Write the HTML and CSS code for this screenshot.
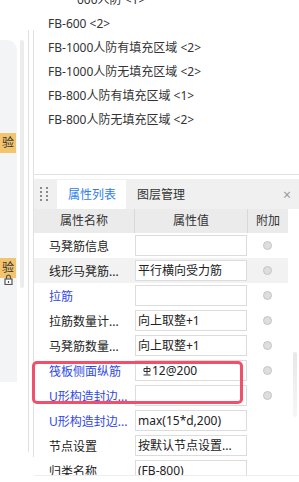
FILE: index.html
```html
<!DOCTYPE html>
<html lang="zh-CN">

<head>
    <meta charset="UTF-8">
    <meta name="viewport" content="width=device-width, initial-scale=1.0">
    <title>属性列表</title>
    <link rel="stylesheet" href="styles.css">
</head>

<body>

    <div class="app">
        <!-- 左侧停靠栏 -->
        <aside class="side">
            <div class="dock">
                <span class="badge badge-first">验</span>
                <span class="badge badge-second">验</span>
                <svg class="lock" width="9" height="11" viewBox="0 0 9 11">
                    <path d="M2.5 5V3.2a2 2 0 0 1 4 0V5" fill="none" stroke="#555" stroke-width="1.2" />
                    <rect x="1" y="5" width="7" height="5.5" fill="#fff" stroke="#555" stroke-width="1.2" />
                    <path d="M4.5 7v2" stroke="#555" stroke-width="1.2" />
                </svg>
            </div>
            <div class="side-scroll"></div>
            <div class="side-line line-a"></div>
            <div class="side-line line-b"></div>
        </aside>

        <main class="main">
            <!-- 构件列表 -->
            <ul class="list">
                <li class="cut">000人防 &lt;1&gt;</li>
                <li>FB-600 &lt;2&gt;</li>
                <li>FB-1000人防有填充区域 &lt;2&gt;</li>
                <li>FB-1000人防无填充区域 &lt;2&gt;</li>
                <li>FB-800人防有填充区域 &lt;1&gt;</li>
                <li>FB-800人防无填充区域 &lt;2&gt;</li>
            </ul>

            <!-- 属性面板 -->
            <section class="props">
                <div class="tabs">
                    <span class="grip"><i></i><i></i><i></i><i></i><i></i><i></i><i></i><i></i></span>
                    <span class="tab active">属性列表</span>
                    <span class="tab">图层管理</span>
                    <span class="close">×</span>
                </div>

                <div class="props-body">
                    <div class="grid">
                        <div class="row head">
                            <div class="c-name">属性名称</div>
                            <div class="c-val">属性值</div>
                            <div class="c-add">附加</div>
                        </div>
                        <div class="row">
                            <div class="c-name">马凳筋信息</div>
                            <div class="c-val"><div class="box"></div></div>
                            <div class="c-add"><span class="dot"></span></div>
                        </div>
                        <div class="row sel">
                            <div class="c-name">线形马凳筋...</div>
                            <div class="c-val"><div class="box">平行横向受力筋</div></div>
                            <div class="c-add"><span class="dot"></span></div>
                        </div>
                        <div class="row">
                            <div class="c-name blue">拉筋</div>
                            <div class="c-val"><div class="box"></div></div>
                            <div class="c-add"><span class="dot"></span></div>
                        </div>
                        <div class="row">
                            <div class="c-name">拉筋数量计...</div>
                            <div class="c-val"><div class="box">向上取整+1</div></div>
                            <div class="c-add"><span class="dot"></span></div>
                        </div>
                        <div class="row">
                            <div class="c-name">马凳筋数量...</div>
                            <div class="c-val"><div class="box">向上取整+1</div></div>
                            <div class="c-add"><span class="dot"></span></div>
                        </div>
                        <div class="row">
                            <div class="c-name blue">筏板侧面纵筋</div>
                            <div class="c-val">
                                <div class="box"><svg class="grade" width="8" height="10" viewBox="0 0 8 10">
                                        <path d="M4 0v8.5M1 2.5h6v3H1zM0.5 9h7" fill="none" stroke="#333" stroke-width="1" />
                                    </svg>12@200</div>
                            </div>
                            <div class="c-add"><span class="dot"></span></div>
                        </div>
                        <div class="row">
                            <div class="c-name blue">U形构造封边...</div>
                            <div class="c-val"><div class="box"></div></div>
                            <div class="c-add"><span class="dot"></span></div>
                        </div>
                        <div class="row">
                            <div class="c-name blue">U形构造封边...</div>
                            <div class="c-val"><div class="box">max(15*d,200)</div></div>
                            <div class="c-add"></div>
                        </div>
                        <div class="row">
                            <div class="c-name">节点设置</div>
                            <div class="c-val"><div class="box">按默认节点设置...</div></div>
                            <div class="c-add"></div>
                        </div>
                        <div class="row">
                            <div class="c-name">归类名称</div>
                            <div class="c-val"><div class="box">(FB-800)</div></div>
                            <div class="c-add"></div>
                        </div>
                    </div>
                    <div class="vbar"><div class="thumb"></div></div>
                </div>

                <!-- 标注框 -->
                <div class="mark"></div>
            </section>
        </main>
    </div>

</body>

</html>
```

FILE: styles.css
```css
/* RESET */
* {
    margin: 0;
    padding: 0;
    box-sizing: border-box;
}

body {
    width: 299px;
    height: 482px;
    overflow: hidden;
    background: #fff;
    font-family: "Noto Sans", "Noto Sans CJK SC", sans-serif;
    font-size: 12px;
    color: #333;
}

.app {
    display: flex;
    align-items: flex-start;
    height: 482px;
}

/* LEFT DOCK */
.side {
    display: flex;
    align-items: flex-start;
    width: 34px;
    flex-shrink: 0;
}

.dock {
    width: 17px;
    height: 342px;
    margin-top: 40px;
    background: #f3f4f6;
    border-top-right-radius: 10px;
    display: flex;
    flex-direction: column;
}

.badge {
    display: block;
    width: 16px;
    height: 20px;
    line-height: 20px;
    background: #f2c46e;
    color: #333;
    text-align: right;
    padding-right: 2px;
    overflow: hidden;
}

.badge-first {
    margin-top: 93px;
}

.badge-second {
    margin-top: 105px;
}

.lock {
    display: block;
    margin: -4px 0 0 4px;
}

.side-scroll {
    width: 4px;
    height: 248px;
    margin: 40px 0 0 3px;
    background: #ececec;
    border-radius: 2px;
}

.side-line {
    width: 1px;
    margin: 30px 0 0 4px;
    background: #e0e0e0;
}

.line-a {
    height: 422px;
}

.line-b {
    height: 427px;
}

/* MAIN */
.main {
    flex: 1;
    min-width: 0;
}

.list {
    list-style: none;
    margin-top: -12px;
    height: 187px;
    padding-left: 14px;
    border-bottom: 1px solid #e2e2e2;
}

.list li {
    height: 24px;
    line-height: 24px;
    white-space: nowrap;
}

.list li.cut {
    padding-left: 29px;
}

/* PROPERTY PANEL */
.props {
    position: relative;
    margin-top: 4px;
}

.tabs {
    display: flex;
    align-items: flex-end;
    height: 30px;
    background: #f0f0f0;
    padding-left: 6px;
}

.grip {
    display: grid;
    grid-template-columns: 2px 2px;
    column-gap: 4px;
    row-gap: 2px;
    align-self: center;
    margin-right: 9px;
}

.grip i {
    display: block;
    width: 2px;
    height: 2px;
    background: #8a8a8a;
}

.tab {
    height: 29px;
    line-height: 29px;
    padding: 0 10px 0 11px;
    color: #333;
}

.tab.active {
    background: #fff;
    color: #2f80ed;
}

.close {
    margin-left: auto;
    align-self: center;
    padding-right: 8px;
    color: #9a9a9a;
    font-size: 14px;
}

.props-body {
    display: flex;
    height: 267px;
    overflow: hidden;
    border-bottom: 1px solid #eeeeee;
}

.grid {
    width: 254px;
    flex-shrink: 0;
}

.row {
    display: grid;
    grid-template-columns: 100px 113px 41px;
    align-items: center;
    height: 25px;
    color: #222;
}

.row.head {
    height: 24px;
    background: #ebebeb;
    text-align: center;
    color: #333;
}

.row.head > div {
    height: 24px;
    line-height: 24px;
}

.row.head .c-val,
.row.head .c-add {
    border-left: 1px solid #d8d8d8;
}

.row.sel {
    background: #f2f2f2;
}

.c-name {
    padding-left: 15px;
    white-space: nowrap;
    overflow: hidden;
}

.row.head .c-name {
    padding-left: 0;
}

.blue {
    color: #3048e6;
}

.box {
    width: 112px;
    height: 21px;
    margin-left: 1px;
    border: 1px solid #dcdcdc;
    background: #fff;
    line-height: 19px;
    padding-left: 2px;
    white-space: nowrap;
    overflow: hidden;
}

.grade {
    margin: 0 1px 0 5px;
    vertical-align: -1px;
}

.c-add {
    display: flex;
    justify-content: center;
}

.dot {
    width: 9px;
    height: 9px;
    border-radius: 50%;
    background: #dedede;
    border: 1px solid #c4c4c4;
}

.vbar {
    flex: 1;
}

.thumb {
    width: 4px;
    height: 65px;
    margin: 143px 0 0 5px;
    border-radius: 2px;
    background: linear-gradient(#e8e8e8, #f6f6f6);
}

/* ANNOTATION */
.mark {
    position: absolute;
    left: -2px;
    top: 182px;
    width: 211px;
    height: 43px;
    border: 3px solid #f0506a;
    border-radius: 5px;
    pointer-events: none;
}
```
